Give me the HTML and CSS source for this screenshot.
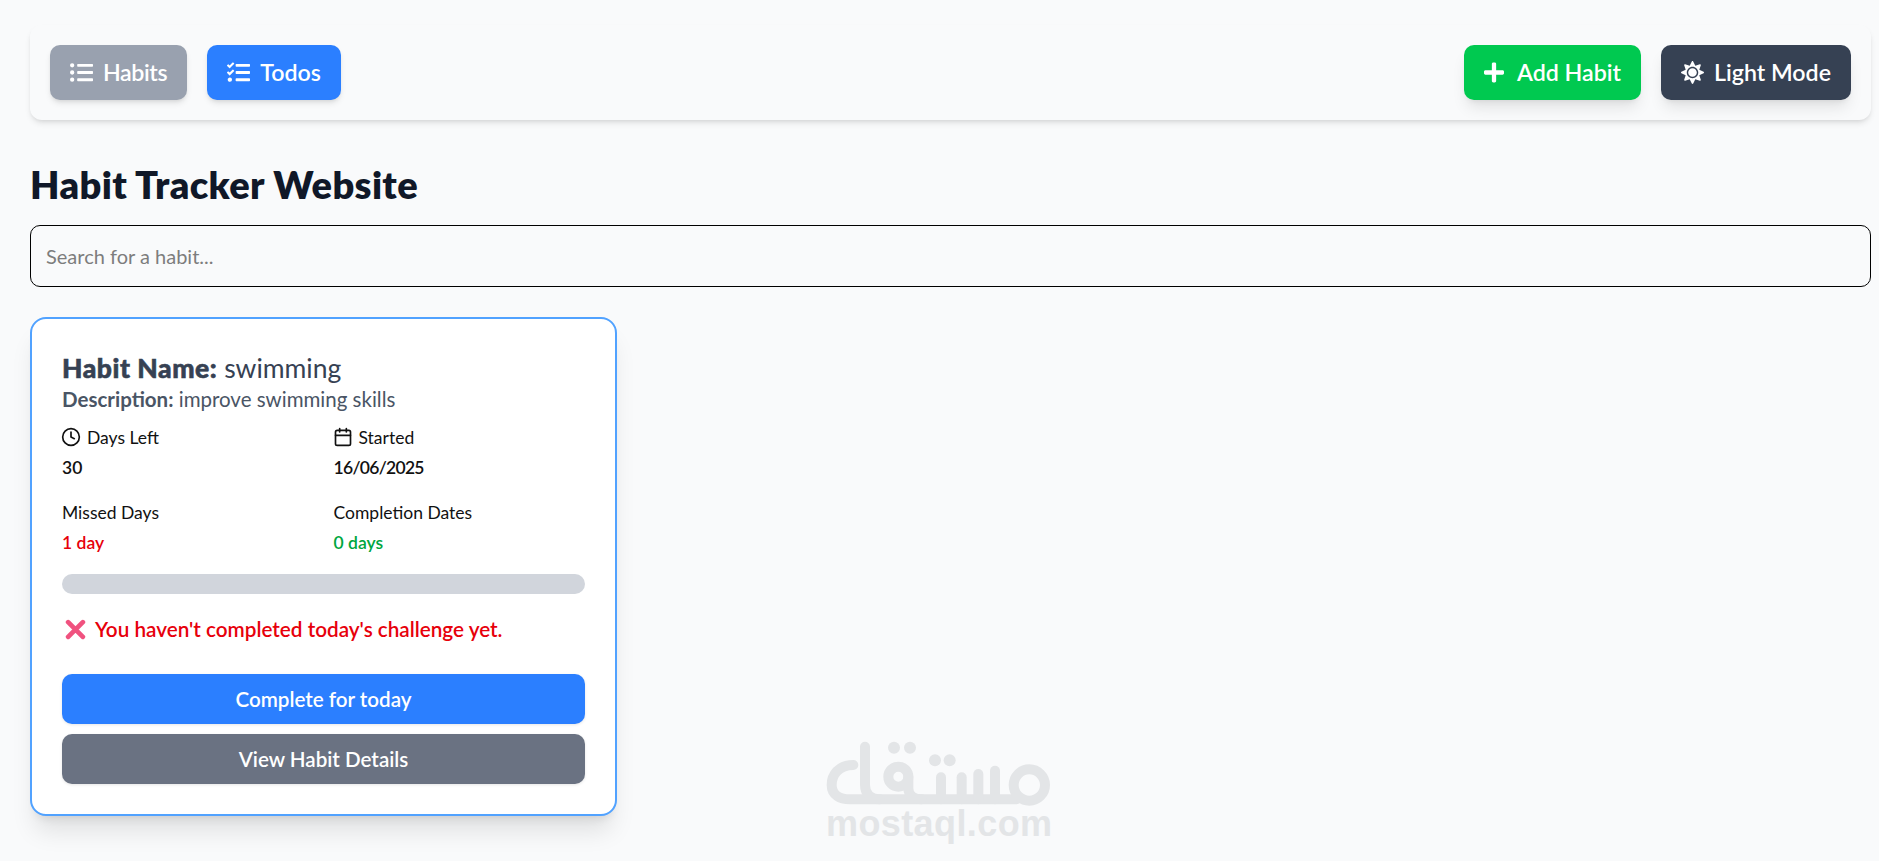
FILE: index.html
```html
<!DOCTYPE html>
<html lang="en">
<head>
<meta charset="utf-8">
<title>Habit Tracker Website</title>
<link rel="stylesheet" href="styles.css">
</head>
<body>
<nav class="navbar">
  <div class="nav-group">
    <button class="btn btn-gray"><svg class="ico" viewBox="0 0 512 512"><path d="M48 48a48 48 0 1 0 48 48 48 48 0 0 0-48-48zm0 160a48 48 0 1 0 48 48 48 48 0 0 0-48-48zm0 160a48 48 0 1 0 48 48 48 48 0 0 0-48-48zm448 16H176a16 16 0 0 0-16 16v32a16 16 0 0 0 16 16h320a16 16 0 0 0 16-16v-32a16 16 0 0 0-16-16zm0-320H176a16 16 0 0 0-16 16v32a16 16 0 0 0 16 16h320a16 16 0 0 0 16-16V80a16 16 0 0 0-16-16zm0 160H176a16 16 0 0 0-16 16v32a16 16 0 0 0 16 16h320a16 16 0 0 0 16-16v-32a16 16 0 0 0-16-16z"/></svg>Habits</button>
    <button class="btn btn-blue"><svg class="ico" viewBox="0 0 512 512"><path d="M139.61 35.5a12 12 0 0 0-17 0L58.93 98.81l-22.7-22.12a12 12 0 0 0-17 0L3.53 92.41a12 12 0 0 0 0 17l47.59 47.4a12.78 12.78 0 0 0 17.61 0l15.59-15.62L156.52 69a12.09 12.09 0 0 0 .09-17zm0 159.19a12 12 0 0 0-17 0l-63.68 63.72-22.7-22.1a12 12 0 0 0-17 0L3.53 252a12 12 0 0 0 0 17L51 316.5a12.77 12.77 0 0 0 17.6 0l15.7-15.69 72.2-72.22a12 12 0 0 0 .09-16.9zM64 368c-26.49 0-48.59 21.5-48.59 48S37.53 464 64 464a48 48 0 0 0 0-96zm432 16H208a16 16 0 0 0-16 16v32a16 16 0 0 0 16 16h288a16 16 0 0 0 16-16v-32a16 16 0 0 0-16-16zm0-320H208a16 16 0 0 0-16 16v32a16 16 0 0 0 16 16h288a16 16 0 0 0 16-16V80a16 16 0 0 0-16-16zm0 160H208a16 16 0 0 0-16 16v32a16 16 0 0 0 16 16h288a16 16 0 0 0 16-16v-32a16 16 0 0 0-16-16z"/></svg>Todos</button>
  </div>
  <div class="nav-group">
    <button class="btn btn-green"><svg class="ico ico-plus" viewBox="0 0 448 512"><path d="M416 208H272V64c0-17.67-14.33-32-32-32h-32c-17.67 0-32 14.33-32 32v144H32c-17.67 0-32 14.33-32 32v32c0 17.67 14.33 32 32 32h144v144c0 17.67 14.33 32 32 32h32c17.67 0 32-14.33 32-32V304h144c17.67 0 32-14.33 32-32v-32c0-17.67-14.33-32-32-32z"/></svg>Add Habit</button>
    <button class="btn btn-dark"><svg class="ico" viewBox="0 0 512 512"><path d="M256 160c-52.9 0-96 43.1-96 96s43.1 96 96 96 96-43.1 96-96-43.1-96-96-96zm246.4 80.5l-94.7-47.3 33.5-100.4c4.5-13.6-8.4-26.5-21.9-21.9l-100.4 33.5-47.4-94.8c-6.4-12.8-24.6-12.8-31 0l-47.3 94.7L92.7 70.8c-13.6-4.5-26.5 8.4-21.9 21.9l33.5 100.4-94.7 47.4c-12.8 6.4-12.8 24.6 0 31l94.7 47.3-33.5 100.5c-4.5 13.6 8.4 26.5 21.9 21.9l100.4-33.5 47.3 94.7c6.4 12.8 24.6 12.8 31 0l47.3-94.7 100.4 33.5c13.6 4.5 26.5-8.4 21.9-21.9l-33.5-100.4 94.7-47.3c13-6.5 13-24.7.2-31.1zm-155.9 106c-49.9 49.9-131.1 49.9-181 0-49.9-49.9-49.9-131.1 0-181 49.9-49.9 131.1-49.9 181 0 49.9 49.9 49.9 131.1 0 181z"/></svg>Light Mode</button>
  </div>
</nav>

<h1 class="page-title">Habit Tracker Website</h1>
<input class="search" type="text" placeholder="Search for a habit...">

<article class="card">
  <h2 class="card-title"><strong>Habit Name:</strong> swimming</h2>
  <p class="card-desc"><strong>Description:</strong> improve swimming skills</p>
  <div class="stats">
    <div class="stat">
      <div class="stat-label"><svg class="stat-ico" viewBox="0 0 24 24"><circle cx="12" cy="12" r="10"/><polyline points="12 6 12 12 16 14"/></svg>Days Left</div>
      <div class="stat-value">30</div>
    </div>
    <div class="stat">
      <div class="stat-label"><svg class="stat-ico" viewBox="0 0 24 24"><rect x="3" y="4" width="18" height="18" rx="2"/><line x1="16" y1="2" x2="16" y2="6"/><line x1="8" y1="2" x2="8" y2="6"/><line x1="3" y1="10" x2="21" y2="10"/></svg>Started</div>
      <div class="stat-value val-date">16/06/2025</div>
    </div>
    <div class="stat">
      <div class="stat-label">Missed Days</div>
      <div class="stat-value val-red">1 day</div>
    </div>
    <div class="stat">
      <div class="stat-label">Completion Dates</div>
      <div class="stat-value val-green">0 days</div>
    </div>
  </div>
  <div class="progress"></div>
  <p class="status"><svg class="status-ico" viewBox="0 0 20 20"><path d="M3 3 L17 17 M17 3 L3 17"/></svg>You haven't completed today's challenge yet.</p>
  <div class="card-actions">
    <button class="action action-blue">Complete for today</button>
    <button class="action action-gray">View Habit Details</button>
  </div>
</article>

<div class="watermark">
  <svg class="wm-logo" viewBox="0 0 840 300">
    <g class="wm-strokes">
      <path d="M160 135 C115 135 95 165 95 195 C95 225 120 238 150 238 L650 238"/>
      <path d="M195 80 L195 195 C195 225 215 238 240 238"/>
      <circle cx="295" cy="170" r="30"/>
      <path d="M325 170 L325 205 C325 228 345 238 365 238"/>
      <path d="M423 172 L423 238"/>
      <path d="M485 172 L485 238"/>
      <path d="M535 162 L535 238"/>
      <path d="M585 152 L585 238"/>
      <circle cx="688" cy="195" r="47"/>
    </g>
    <circle class="wm-dot" cx="282" cy="83" r="18"/>
    <circle class="wm-dot" cx="330" cy="83" r="18"/>
    <circle class="wm-dot" cx="405" cy="121" r="18"/>
    <circle class="wm-dot" cx="449" cy="121" r="18"/>
  </svg>
  <span class="wm-text">mostaql.com</span>
</div>
</body>
</html>
```
FILE: styles.css
```css
* { box-sizing: border-box; }
html, body { margin: 0; height: 861px; overflow: hidden; }
body {
  background: #f9fafb;
  padding: 25px 8px 0 30px;
  font-family: Lato, "Noto Sans", sans-serif;
  position: relative;
}

.navbar {
  display: flex;
  justify-content: space-between;
  align-items: center;
  height: 95px;
  padding: 0 20px;
  border-radius: 12px;
  box-shadow: 0 4px 6px -1px rgba(0,0,0,.1), 0 2px 4px -2px rgba(0,0,0,.1);
}
.nav-group { display: flex; gap: 20px; }

.btn {
  display: flex;
  align-items: center;
  gap: 10px;
  height: 55px;
  padding: 0 20px;
  border: 0;
  border-radius: 10px;
  color: #fff;
  font: 600 23.2px/1 Lato, "Noto Sans", sans-serif;
  box-shadow: 0 4px 6px -1px rgba(0,0,0,.1), 0 2px 4px -2px rgba(0,0,0,.1);
}
.btn-gray { background: #99a1af; letter-spacing: -.4px; }
.btn-blue { background: #2b7fff; }
.btn-green { background: #00c950; box-shadow: 0 10px 15px -3px rgba(0,0,0,.1), 0 4px 6px -4px rgba(0,0,0,.1); }
.btn-dark { background: #364153; box-shadow: 0 10px 15px -3px rgba(0,0,0,.1), 0 4px 6px -4px rgba(0,0,0,.1); }
.ico { width: 23px; height: 23px; fill: #fff; flex: none; }
.ico-plus { width: 20px; margin-right: 3px; }

.page-title {
  margin: 37px 0 0;
  height: 46px;
  font-size: 38px;
  line-height: 54px;
  font-weight: 800;
  letter-spacing: .35px;
  color: #101828;
}

.search {
  display: block;
  width: 100%;
  height: 62px;
  margin-top: 22px;
  padding: 0 15px;
  border: 1px solid #000;
  border-radius: 10px;
  background: transparent;
  font: 400 20px Lato, "Noto Sans", sans-serif;
  outline: 0;
}
.search::placeholder { color: #7d7d7d; opacity: 1; }

.card {
  width: 587px;
  height: 499px;
  margin-top: 30px;
  padding: 33px 30px 30px;
  background: #fff;
  border: 2px solid #51a2ff;
  border-radius: 16px;
  box-shadow: 0 20px 25px -5px rgba(0,0,0,.1), 0 8px 10px -6px rgba(0,0,0,.1);
}
.card-title {
  margin: 0;
  font-size: 26.5px;
  line-height: 32px;
  font-weight: 400;
  color: #364153;
}
.card-title strong { font-weight: 900; letter-spacing: .55px; -webkit-text-stroke: .6px #364153; }
.card-desc {
  margin: 1px 0 0;
  font-size: 20.5px;
  line-height: 28px;
  color: #4a5565;
}
.card-desc strong { font-weight: 700; }

.stats {
  display: grid;
  grid-template-columns: 1fr 1fr;
  column-gap: 20px;
  row-gap: 20px;
  margin-top: 12px;
}
.stat-label {
  display: flex;
  align-items: center;
  gap: 6px;
  height: 24px;
  font-size: 17.5px;
  color: #111;
}
.stat-ico { width: 20px; height: 20px; margin-left: -1px; fill: none; stroke: #111; stroke-width: 2; stroke-linecap: round; stroke-linejoin: round; }
.stat-value {
  margin-top: 7px;
  font-size: 17.5px;
  line-height: 24px;
  font-weight: 600;
  color: #111;
}
.val-date { letter-spacing: -.7px; }
.val-red { color: #e7000b; }
.val-green { color: #00a63e; }

.progress {
  height: 20px;
  margin-top: 19px;
  border-radius: 10px;
  background: #d1d5dc;
}

.status {
  display: flex;
  align-items: center;
  gap: 9px;
  margin: 21px 0 0;
  height: 28px;
  font-size: 20.7px;
  font-weight: 600;
  color: #e7000b;
}
.status-ico { width: 21px; height: 21px; margin-left: 3px; fill: none; stroke: #f0527f; stroke-width: 4.5; stroke-linecap: round; }

.card-actions { display: flex; flex-direction: column; gap: 10px; margin-top: 31px; }
.action {
  height: 50px;
  border: 0;
  border-radius: 10px;
  color: #fff;
  font: 600 20.6px/1 Lato, "Noto Sans", sans-serif;
  box-shadow: 0 1px 3px rgba(0,0,0,.1);
}
.action-blue { background: #2b7fff; }
.action-gray { background: #6a7282; }

.watermark {
  position: absolute;
  left: 800px;
  top: 720px;
  width: 280px;
  pointer-events: none;
}
.wm-logo { display: block; width: 280px; height: 100px; }
.wm-strokes { fill: none; stroke: #e3e5e7; stroke-width: 30; stroke-linecap: round; stroke-linejoin: round; }
.wm-dot { fill: #e3e5e7; }
.wm-text {
  position: absolute;
  left: 26px;
  top: 82px;
  font: 700 36px/1.2 "Liberation Sans", sans-serif;
  letter-spacing: .4px;
  color: #e3e5e7;
}
```
